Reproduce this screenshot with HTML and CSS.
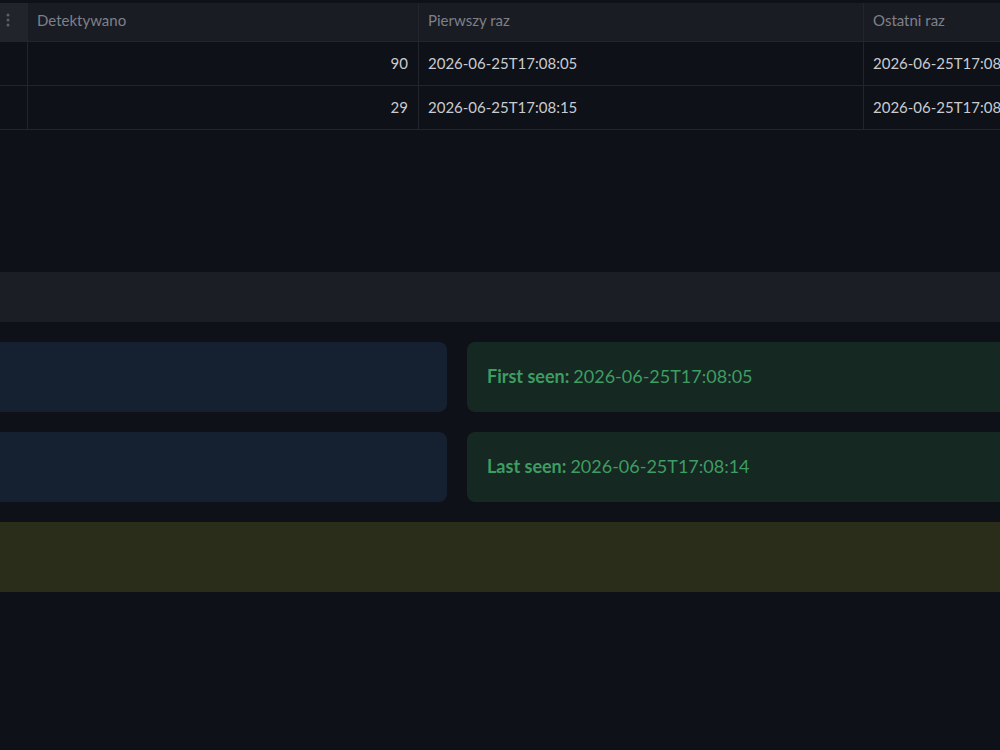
FILE: index.html
```html
<!DOCTYPE html>
<html lang="pl">
<head>
    <meta charset="UTF-8">
    <meta name="viewport" content="width=device-width, initial-scale=1.0">
    <title>Detekcje</title>
    <link rel="stylesheet" href="styles.css">
</head>
<body>
<div class="page">
    <div class="grid-table">
        <div class="cell head index-head">
            <svg width="4" height="14" viewBox="0 0 4 14"><circle cx="2" cy="2" r="1.5"/><circle cx="2" cy="7" r="1.5"/><circle cx="2" cy="12" r="1.5"/></svg>
        </div>
        <div class="cell head">Detektywano</div>
        <div class="cell head">Pierwszy raz</div>
        <div class="cell head">Ostatni raz</div>

        <div class="cell index"></div>
        <div class="cell num">90</div>
        <div class="cell">2026-06-25T17:08:05</div>
        <div class="cell">2026-06-25T17:08:14</div>

        <div class="cell index"></div>
        <div class="cell num">29</div>
        <div class="cell">2026-06-25T17:08:15</div>
        <div class="cell">2026-06-25T17:08:21</div>
    </div>

    <div class="toolbar"></div>

    <div class="wide">
        <div class="alerts">
            <div class="alert info"></div>
            <div class="alert success"><strong>First seen:</strong> 2026-06-25T17:08:05</div>
            <div class="alert info"></div>
            <div class="alert success"><strong>Last seen:</strong> 2026-06-25T17:08:14</div>
        </div>
        <div class="alert warning"></div>
    </div>
</div>
</body>
</html>
```

FILE: styles.css
```css
* {
    margin: 0;
    padding: 0;
    box-sizing: border-box;
}

html, body {
    background-color: #0e1117;
    overflow: hidden;
}

body {
    width: 1000px;
    height: 750px;
    font-family: 'Lato', 'Noto Sans', sans-serif;
    color: #fafafa;
}

.page {
    padding-top: 3px;
}

.grid-table {
    display: grid;
    grid-template-columns: 28px 391px 445px 400px;
    width: 1264px;
    font-size: 15px;
}

.cell {
    height: 44px;
    padding: 0 10px 2px 9px;
    display: flex;
    align-items: center;
    color: #c9cbd1;
    border-bottom: 1px solid #23252d;
    border-right: 1px solid #23252d;
    white-space: nowrap;
    overflow: hidden;
}

.head {
    height: 39px;
    padding-bottom: 5px;
    background: #1a1c24;
    color: #7e8089;
}

.index-head {
    background: #22242c;
    padding: 0 0 4px 6px;
}

.index-head svg {
    fill: #5d5f68;
}

.index {
    background: #0e1117;
}

.num {
    justify-content: flex-end;
}

.toolbar {
    height: 50px;
    margin-top: 142px;
    background: #1c1e26;
}

.wide {
    margin-left: -419px;
    width: 1800px;
    padding-top: 20px;
    display: flex;
    flex-direction: column;
    gap: 20px;
}

.alerts {
    display: grid;
    grid-template-columns: 866px 866px;
    gap: 20px;
}

.alert {
    height: 70px;
    border-radius: 8px;
    padding: 0 20px 2px;
    display: flex;
    align-items: center;
    font-size: 18px;
}

.alert strong {
    font-weight: 700;
    margin-right: 4px;
}

.info {
    background: #152031;
}

.success {
    background: #152821;
    color: #3e9d62;
}

.warning {
    background: #2a2d19;
    border-radius: 0;
}
```
